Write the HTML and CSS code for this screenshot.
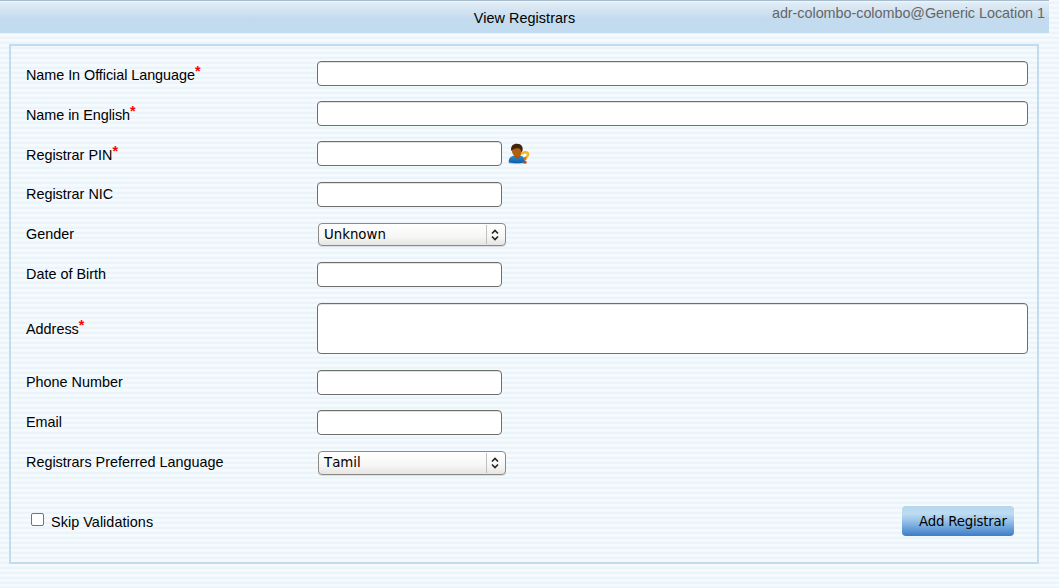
FILE: index.html
```html
<!DOCTYPE html>
<html lang="en">
<head>
<meta charset="utf-8">
<title>View Registrars</title>
<link rel="stylesheet" href="styles.css">
</head>
<body>
<header class="topbar">
  <h1 class="title">View Registrars</h1>
  <div class="user">adr-colombo-colombo@Generic Location 1</div>
</header>
<form class="panel">
  <div class="row required"><label class="label"><span class="snug">Name In Official Language</span><span class="star">*</span></label><input class="field wide" type="text"></div>
  <div class="row required"><label class="label"><span class="snug">Name in English</span><span class="star">*</span></label><input class="field wide" type="text"></div>
  <div class="row required tall"><label class="label"><span>Registrar PIN</span><span class="star">*</span></label><input class="field" type="text">
    <svg class="person" viewBox="0 0 22 22" width="22" height="22">
      <defs><linearGradient id="shirt" x1="0" y1="0" x2="0" y2="1"><stop offset="0" stop-color="#2f91d6"/><stop offset="1" stop-color="#0c5ba8"/></linearGradient></defs>
      <ellipse cx="9" cy="20" rx="9" ry="1.300" fill="#c6d3da"/>
      <path d="M.8 19.500C.3 15.500 2.500 13.300 6.500 12.500h6c3 .5 4.500 3 4.500 7-4 1-11.700 1-16.200 0z" fill="url(#shirt)"/>
      <path d="M6 11.500h6.500l-.5 3-2.500 1.500-3-2z" fill="#a95409"/>
      <ellipse cx="9" cy="8.200" rx="5" ry="5.500" fill="#b0600f"/>
      <path d="M3.300 8C2.100 3.300 5.300.7 9 .8c4.500 0 6.600 3.300 5.400 7.300L13 9c.2-2-.6-3-1.800-3.600C9.500 4.800 7 5.200 5 6.500z" fill="#42240d"/>
      <path d="M14.200 11.500c.3-3 6-3 6 .1 0 2.200-3 2.200-3.200 4.900" fill="none" stroke="#f6b51b" stroke-width="2.400"/>
      <path d="M17.300 14.200l-.3 2.800" stroke="#dc701c" stroke-width="2.400"/>
      <circle cx="17" cy="19.200" r="1.600" fill="#bd4c1b"/>
    </svg></div>
  <div class="row"><label class="label"><span>Registrar NIC</span></label><input class="field" type="text"></div>
  <div class="row"><label class="label"><span>Gender</span></label><div class="select short"><span class="value">Unknown</span><span class="arrows"><svg width="8" height="12" viewBox="0 0 8 12"><path d="M1 4.500l3-3 3 3M1 7.500l3 3 3-3" fill="none" stroke="#222" stroke-width="1.600"/></svg></span></div></div>
  <div class="row tall"><label class="label"><span>Date of Birth</span></label><input class="field" type="text"></div>
  <div class="row address"><label class="label"><span>Address</span><span class="star">*</span></label><textarea class="field wide area"></textarea></div>
  <div class="row"><label class="label"><span>Phone Number</span></label><input class="field" type="text"></div>
  <div class="row"><label class="label"><span>Email</span></label><input class="field" type="text"></div>
  <div class="row"><label class="label"><span>Registrars Preferred Language</span></label><div class="select"><span class="value">Tamil</span><span class="arrows"><svg width="8" height="12" viewBox="0 0 8 12"><path d="M1 4.500l3-3 3 3M1 7.500l3 3 3-3" fill="none" stroke="#222" stroke-width="1.600"/></svg></span></div></div>
  <div class="footer">
    <label class="skip"><input class="check" type="checkbox"><span>Skip Validations</span></label>
    <button class="add" type="button">Add Registrar</button>
  </div>
</form>
</body>
</html>
```
FILE: styles.css
```css
* { box-sizing: border-box; }
html {
  background: repeating-linear-gradient(to bottom, #f6faff 0, #f6faff 1px, #f2f9fd 1px, #f2f9fd 2px, #eaf4f9 2px, #eaf4f9 4px, #f5faff 4px, #f5faff 5px);
}
body {
  margin: 0;
  height: 588px;
  overflow: hidden;
  font-family: "Liberation Sans", Arial, sans-serif;
  font-size: 14.400px;
  color: #000;
}
.topbar {
  display: grid;
  grid-template-columns: 1fr;
  width: 1049px;
  height: 33px;
  border-top: 1px solid #a9bdd0;
  background: linear-gradient(to bottom, #f2f8fc 0, #e0ecf5 2px, #c3dbee 18px, #c3dbee 100%);
}
.title, .user { grid-area: 1 / 1; margin: 0; font-size: 14.400px; font-weight: normal; line-height: 18px; }
.title { padding-top: 8px; text-align: center; letter-spacing: 0.06px; }
.user { padding: 3px 4px 0 0; text-align: right; color: #666; letter-spacing: -0.040px; }
.panel {
  width: 1030px;
  height: 520px;
  margin: 11px 0 0 9px;
  padding: 8px 9px 0 15px;
  border: 2px solid #c3dbee;
}
.row { display: flex; align-items: flex-start; height: 40px; padding-top: 7px; }
.row.tall { height: 41px; }
.row.address { height: 67px; }
.label { flex: 0 0 291px; padding-top: 3px; line-height: 18px; white-space: nowrap; }
.required .label { padding-top: 5px; }
.address .label { padding-top: 17px; }
.snug { letter-spacing: -0.050px; }
.star { color: #f00; font-size: 14.400px; font-weight: bold; line-height: 0; vertical-align: 4px; }
.field {
  flex: none;
  width: 185px;
  height: 25px;
  margin: 0;
  padding: 2px 5px;
  border: 1px solid #706e6b;
  border-radius: 4px;
  background: #fff;
  box-shadow: inset 0 1px 0 #e2e2e1;
}
.field.wide { width: 711px; }
.field.area { height: 51px; resize: none; }
.person { margin: 2px 0 0 6px; }
.select {
  display: flex;
  justify-content: space-between;
  width: 188px;
  height: 24px;
  margin: 1px 0 0 1px;
  padding: 1px 0 1px 5px;
  border: 1px solid #8d8984;
  border-radius: 4px;
  background: linear-gradient(#fff, #f6f6f5 60%, #e6e5e3);
  box-shadow: 0 1px 0 #d9dfe2;
  font-family: "DejaVu Sans", sans-serif;
  font-size: 13.330px;
  font-kerning: none;
  line-height: 19px;
}
.select.short { height: 23px; }
.arrows { display: flex; align-items: center; width: 19px; padding-left: 4px; border-left: 1px solid #c2c0be; }
.footer { display: flex; align-items: flex-start; justify-content: space-between; padding: 23px 14px 0 5px; }
.skip { display: flex; line-height: 18px; padding-top: 7px; letter-spacing: 0.050px; }
.check {
  appearance: none;
  width: 13px;
  height: 13px;
  margin: 0 7px 0 0;
  border: 1px solid #77736e;
  border-radius: 2px;
  background: #fff;
}
.add {
  width: 112px;
  height: 30px;
  padding: 1px 7px 0 17px;
  border: 0;
  border-radius: 4px;
  background: linear-gradient(#b5d6ed 0, #bddcf1 25%, #9fc8ea 45%, #3c7dca 100%);
  font: 13.330px "DejaVu Sans", sans-serif;
  letter-spacing: -0.200px;
  text-align: left;
  white-space: nowrap;
  color: #000;
}
```
